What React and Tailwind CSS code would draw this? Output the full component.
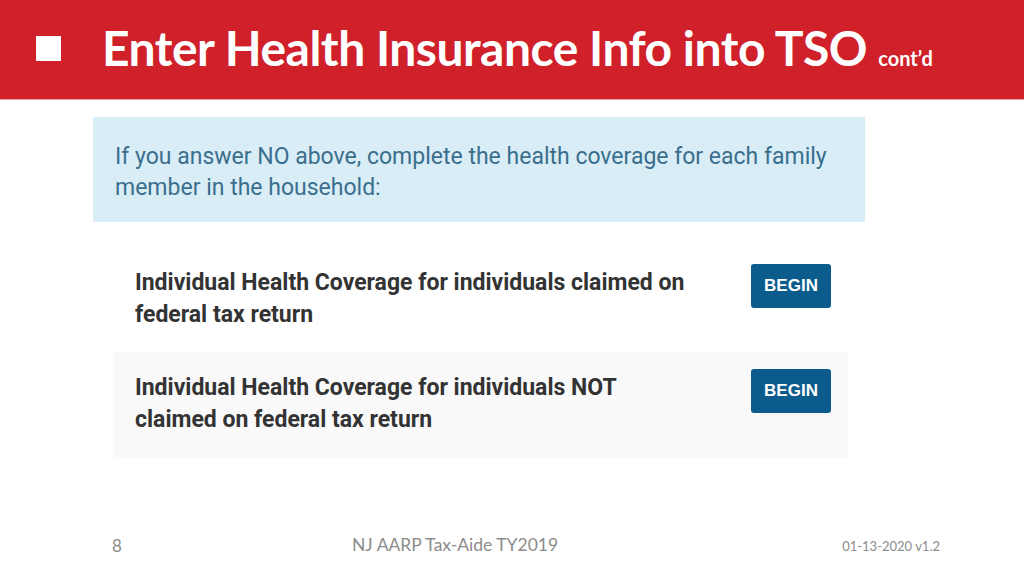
// Slide: Enter Health Insurance Info into TSO (cont'd)
export default function App() {
  return (
    <div className="w-[1024px] h-[576px] bg-white flex flex-col overflow-hidden">
      {/* red title bar */}
      <div className="h-[100px] bg-[#d0202a] flex items-center pl-[36px] shrink-0 border-b border-[#e8a0a3]">
        <div className="w-[25px] h-[25px] bg-white -mt-[2px]" />
        <h1
          className="ml-[41px] -mt-[3px] text-white font-bold text-[48px] leading-none tracking-[-0.5px]"
          style={{ fontFamily: 'Lato, "Open Sans", sans-serif' }}
        >
          Enter Health Insurance Info into TSO{' '}
          <span className="text-[20px] tracking-normal">cont’d</span>
        </h1>
      </div>

      {/* info box */}
      <div className="ml-[93px] mt-[17px] w-[772px] h-[105px] bg-[#d9edf7] pl-[22px] pt-[24px]">
        <p
          className="text-[#3a6f8d] text-[23px] leading-[31px]"
          style={{ fontFamily: 'Roboto, sans-serif' }}
        >
          If you answer NO above, complete the health coverage for each family
          <br />
          member in the household:
        </p>
      </div>

      {/* coverage rows */}
      <div className="ml-[113px] mt-[25px] w-[735px] flex flex-col" style={{ fontFamily: 'Roboto, sans-serif' }}>
        {[
          ['Individual Health Coverage for individuals claimed on', 'federal tax return', ''],
          ['Individual Health Coverage for individuals NOT', 'claimed on federal tax return', 'bg-[#f9f9f9]'],
        ].map(([a, b, bg], i) => (
          <div key={i} className={`h-[105px] flex justify-between pl-[22px] pr-[17px] ${bg}`}>
            <p className="pt-[20px] text-[#333333] font-bold text-[23px] leading-[32px]">
              {a}
              <br />
              {b}
            </p>
            <button
              className="mt-[17px] w-[80px] h-[44px] rounded-[3px] bg-[#0b5b8c] text-white font-bold text-[17px]"
              style={{ fontFamily: '"Liberation Sans", Arial, sans-serif' }}
            >
              BEGIN
            </button>
          </div>
        ))}
      </div>

      {/* footer */}
      <div
        className="mt-auto mb-[18px] flex items-end text-[#8c8c8c]"
        style={{ fontFamily: 'Lato, "Open Sans", sans-serif' }}
      >
        <span className="ml-[112px] w-[240px] text-[17px]">8</span>
        <span className="text-[17.5px]">NJ AARP Tax-Aide TY2019</span>
        <span className="ml-auto mr-[84px] text-[13px] mb-[2px]">01-13-2020 v1.2</span>
      </div>
    </div>
  )
}
